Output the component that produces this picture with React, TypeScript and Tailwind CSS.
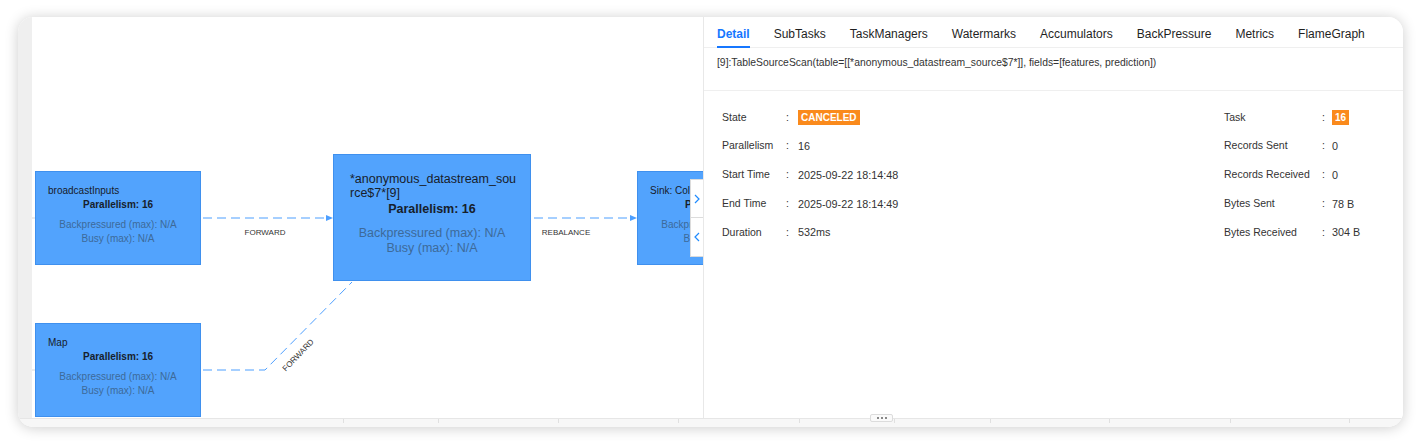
const FONT = "font-['Liberation_Sans',Arial,Helvetica,sans-serif]";

type NodeProps = { name: string; left: string; top: string };

function SmallNode({ name, left, top }: NodeProps) {
  return (
    <div
      className={`absolute ${left} ${top} w-[166px] h-[94px] bg-[#52a3fd] border border-[#3f90ee] pt-[12px] px-[12px] text-[10px] leading-[14px] whitespace-nowrap overflow-hidden`}
    >
      <div className="text-[#17202b]">{name}</div>
      <div className="text-center font-bold text-[#17202b]">Parallelism: 16</div>
      <div className="mt-[6px] text-center text-[#3d6a99]">Backpressured (max): N/A</div>
      <div className="text-center text-[#3d6a99]">Busy (max): N/A</div>
    </div>
  );
}

function Chevron({ dir }: { dir: 'left' | 'right' }) {
  return (
    <svg width="8" height="12" viewBox="0 0 8 12" fill="none" stroke="#1f8bff" strokeWidth="1.2">
      {dir === 'right' ? <polyline points="2,2 6,6 2,10" /> : <polyline points="6,2 2,6 6,10" />}
    </svg>
  );
}

function Graph() {
  return (
    <div className="relative flex-1 h-full bg-white overflow-hidden">
      <svg className="absolute left-0 top-0" width="670" height="401">
        <line x1="0" y1="201" x2="3" y2="201" stroke="#d9d9d9" />
        <line x1="0" y1="353" x2="3" y2="353" stroke="#d9d9d9" />
        <g stroke="#4d9fff" strokeWidth="1" strokeDasharray="9 5" fill="none">
          <line x1="171" y1="201" x2="296" y2="201" />
          <line x1="502" y1="201" x2="600" y2="201" />
          <polyline points="171,353 233,353 320,265" />
        </g>
        <polygon points="294,198 301,201 294,204" fill="#4d9fff" />
        <polygon points="598,198 605,201 598,204" fill="#4d9fff" />
        <g fontFamily="'Liberation Sans', Arial, sans-serif" fontSize="8" fill="#333">
          <text x="233" y="218" textAnchor="middle">FORWARD</text>
          <text x="534" y="218" textAnchor="middle">REBALANCE</text>
          <text x="0" y="0" textAnchor="middle" transform="translate(268 340) rotate(-46)">FORWARD</text>
        </g>
      </svg>

      <SmallNode name="broadcastInputs" left="left-[3px]" top="top-[154px]" />
      <SmallNode name="Map" left="left-[3px]" top="top-[306px]" />

      <div className="absolute left-[301px] top-[137px] w-[198px] h-[127px] bg-[#52a3fd] border border-[#3f90ee] pt-[17px] px-[16px] text-[12.5px] leading-[14px] whitespace-nowrap">
        <div className="text-[#17202b]">
          *anonymous_datastream_sou
          <br />
          rce$7*[9]
        </div>
        <div className="mt-[2px] text-center font-bold text-[#17202b]">Parallelism: 16</div>
        <div className="mt-[10px] text-center leading-[15px] text-[#3d6a99]">Backpressured (max): N/A</div>
        <div className="text-center leading-[15px] text-[#3d6a99]">Busy (max): N/A</div>
      </div>

      <SmallNode name="Sink: Collect" left="left-[605px]" top="top-[154px]" />

      <div className="absolute left-[658px] top-[162px] w-[16px] flex flex-col bg-white">
        <div className="h-[39px] border border-[#dcdcdc] flex items-center pl-[2px]">
          <Chevron dir="right" />
        </div>
        <div className="h-[39px] border border-t-0 border-[#dcdcdc] flex items-center pl-[2px]">
          <Chevron dir="left" />
        </div>
      </div>
    </div>
  );
}

const tabs = ['Detail', 'SubTasks', 'TaskManagers', 'Watermarks', 'Accumulators', 'BackPressure', 'Metrics', 'FlameGraph'];

const leftRows: [string, string][] = [
  ['State', ''],
  ['Parallelism', '16'],
  ['Start Time', '2025-09-22 18:14:48'],
  ['End Time', '2025-09-22 18:14:49'],
  ['Duration', '532ms'],
];

const rightRows: [string, string][] = [
  ['Task', ''],
  ['Records Sent', '0'],
  ['Records Received', '0'],
  ['Bytes Sent', '78 B'],
  ['Bytes Received', '304 B'],
];

function Badge({ children }: { children: string }) {
  return (
    <span className="inline-block bg-[#fa8a1c] text-white font-bold text-[10px] leading-[15px] px-[3px]">
      {children}
    </span>
  );
}

function DetailPanel() {
  return (
    <div className="w-[700px] h-full border-l border-[#e8e8e8] bg-white flex flex-col">
      <div className="h-[31px] flex items-stretch gap-[24px] pl-[13px] pt-[3px] border-b border-[#efefef]">
        {tabs.map((t, i) => (
          <div
            key={t}
            className={`relative flex items-center text-[12px] ${i === 0 ? 'text-[#1677ff] font-bold' : 'text-[#1f1f1f]'}`}
          >
            {t}
            {i === 0 && <div className="absolute left-0 right-0 bottom-[-1px] h-[2px] bg-[#1677ff]" />}
          </div>
        ))}
      </div>
      <div className="h-[43px] pl-[13px] pt-[8px] text-[10.35px] leading-[14px] text-[#333] border-b border-[#efefef]">
        [9]:TableSourceScan(table=[[*anonymous_datastream_source$7*]], fields=[features, prediction])
      </div>
      <div className="flex pt-[12px] pl-[18px] text-[10.5px] text-[#333]">
        <div className="w-[502px]">
          {leftRows.map(([k, v], i) => (
            <div key={k} className="h-[28.8px] flex items-center">
              <span className="w-[64px]">{k}</span>
              <span className="w-[12px]">:</span>
              {i === 0 ? <Badge>CANCELED</Badge> : <span className="text-[10.8px]">{v}</span>}
            </div>
          ))}
        </div>
        <div>
          {rightRows.map(([k, v], i) => (
            <div key={k} className="h-[28.8px] flex items-center">
              <span className="w-[98px]">{k}</span>
              <span className="w-[10px]">:</span>
              {i === 0 ? <Badge>16</Badge> : <span className="text-[10.8px]">{v}</span>}
            </div>
          ))}
        </div>
      </div>
    </div>
  );
}

const ticks = [326, 95, 120, 120, 121, 95, 96, 119, 121, 119];

export default function App() {
  return (
    <div className={`w-[1420px] h-[445px] bg-white pt-[17px] pl-[18px] ${FONT}`}>
      <div className="relative w-[1385px] h-[410px] rounded-[15px] overflow-hidden bg-white shadow-[0_1px_14px_rgba(0,0,0,0.2)] flex flex-col">
        <div className="h-[401px] flex">
          <div className="w-[14px] h-full bg-[#efefef]" />
          <Graph />
          <DetailPanel />
        </div>
        <div className="h-[9px] bg-[#f7f7f7] border-t border-[#e6e6e6] flex items-start">
          {ticks.map((w, i) => (
            <div key={i} className="flex items-start">
              <div style={{ width: w - 1 }} />
              <div className="w-px h-[4px] bg-[#e0e0e0]" />
            </div>
          ))}
        </div>
        <div className="absolute left-[852px] top-[397px] w-[23px] h-[8px] rounded-[2px] border border-[#dcdcdc] bg-[#fafafa] flex items-center justify-center gap-[2px]">
          <span className="w-[2px] h-[2px] bg-[#888]" />
          <span className="w-[2px] h-[2px] bg-[#888]" />
          <span className="w-[2px] h-[2px] bg-[#888]" />
        </div>
      </div>
    </div>
  );
}
